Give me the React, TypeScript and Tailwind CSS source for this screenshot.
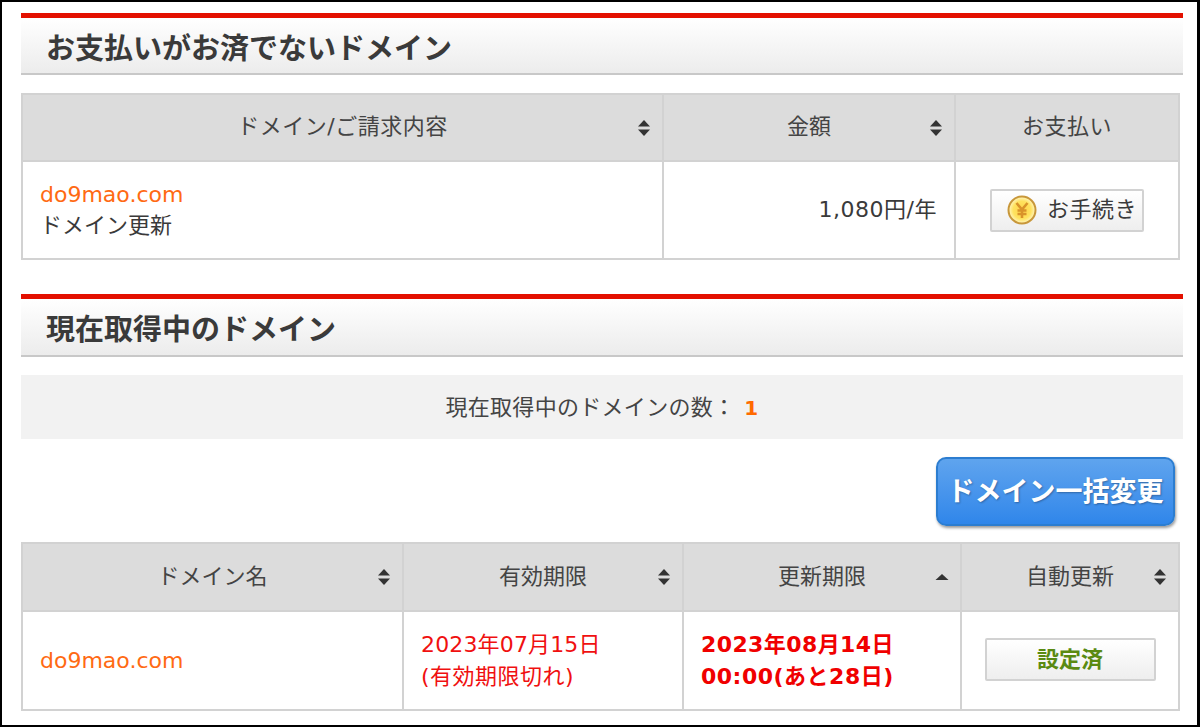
const font = { fontFamily: '"DejaVu Sans", "Noto Sans CJK JP", sans-serif' };

const SortIcon = ({ up = false }: { up?: boolean }) =>
  up ? (
    <svg width="14" height="16" viewBox="0 0 14 16" className="absolute right-[11px] top-1/2 -translate-y-1/2">
      <path d="M0.5 11 L7 5 L13.5 11 Z" fill="#333" />
    </svg>
  ) : (
    <svg width="14" height="18" viewBox="0 0 14 18" className="absolute right-[11px] top-1/2 -translate-y-1/2">
      <path d="M1 7.6 L7 1 L13 7.6 Z" fill="#333" />
      <path d="M1 10.4 L7 17 L13 10.4 Z" fill="#333" />
    </svg>
  );

const Heading = ({ children, tall = false }: { children: React.ReactNode; tall?: boolean }) => (
  <div className={`${tall ? "h-[63px] leading-[63px]" : "h-[62px] leading-[62px]"} border-t-[5px] border-b-2 border-t-[#e31000] border-b-[#c8c8c8] bg-gradient-to-b from-white to-[#ececec] pl-[25px] text-[29px] font-bold text-[#3a3a3a]`}>
    {children}
  </div>
);

const Th = ({ label, sort, width, className = "" }: { label: string; sort?: "both" | "up"; width: number; className?: string }) => (
  <th
    style={{ width }}
    className={`relative border-2 border-[#d2d2d2] bg-[#dcdcdc] p-0 text-center text-[22px] font-normal text-[#444] ${className}`}
  >
    {label}
    {sort && <SortIcon up={sort === "up"} />}
  </th>
);

const YenIcon = () => (
  <svg width="30" height="30" viewBox="0 0 30 30">
    <defs>
      <radialGradient id="coin" cx="50%" cy="50%" r="50%">
        <stop offset="0%" stopColor="#ffd24a" />
        <stop offset="65%" stopColor="#ffe25e" />
        <stop offset="100%" stopColor="#fff6c4" />
      </radialGradient>
    </defs>
    <circle cx="15" cy="15" r="13.5" fill="url(#coin)" stroke="#c8973a" strokeWidth="2" />
    <path d="M9.5 8 L15 14.5 L20.5 8 M15 14.5 V23 M10.5 15.5 H19.5 M10.5 19 H19.5" fill="none" stroke="#d9932a" strokeWidth="2.6" />
  </svg>
);

export default function App() {
  return (
    <div style={font} className="h-[727px] w-[1200px] overflow-hidden border-2 border-r-[3px] border-black bg-white pt-[11px] pr-[14px] pl-[19px] leading-tight text-[#3a3a3a]">
      <Heading>お支払いがお済でないドメイン</Heading>
      <table className="mt-[18px] w-[1157px] table-fixed border-collapse">
        <thead>
          <tr className="h-[67px]">
            <Th label="ドメイン/ご請求内容" sort="both" width={641} className="pb-[2px] tracking-[0.5px]" />
            <Th label="金額" sort="both" width={292} className="pb-[2px]" />
            <Th label="お支払い" width={224} className="pb-[2px] tracking-[0.5px]" />
          </tr>
        </thead>
        <tbody>
          <tr className="h-[98px]">
            <td className="border-2 border-[#d2d2d2] pl-[17px] text-[22px] leading-[31px]">
              <div className="text-[#ff6a13]">do9mao.com</div>
              <div>ドメイン更新</div>
            </td>
            <td className="border-2 border-[#d2d2d2] pr-[17px] text-right text-[22px] tracking-[0.5px]">1,080円/年</td>
            <td className="border-2 border-[#d2d2d2] text-center">
              <button className="inline-flex h-[43px] w-[154px] items-center gap-[10px] rounded-[2px] border-2 border-[#d2d2d2] bg-gradient-to-b from-white to-[#eeeeee] pl-[15px] text-[22px] tracking-[0.5px] text-[#3a3a3a]">
                <YenIcon />
                お手続き
              </button>
            </td>
          </tr>
        </tbody>
      </table>

      <div className="mt-[34px]">
        <Heading tall>現在取得中のドメイン</Heading>
      </div>
      <div className="mt-[18px] flex h-[64px] items-center justify-center gap-[9px] bg-[#f2f2f2] pt-[2px] text-[22px] tracking-[0.3px] text-[#444]">
        <span>現在取得中のドメインの数：</span>
        <span className="text-[20px] font-bold text-[#ff6a00]">1</span>
      </div>
      <div className="mt-[18px] flex justify-end pr-[8px]">
        <button className="h-[69px] w-[239px] rounded-[10px] border-2 border-[#2c7dd0] bg-gradient-to-b from-[#5fa4ee] to-[#2f86ea] text-[27px] font-bold whitespace-nowrap text-white shadow-[1px_2px_3px_rgba(0,0,0,0.4)] [text-shadow:1px_1px_2px_rgba(0,0,0,0.3)]">
          ドメイン一括変更
        </button>
      </div>
      <table className="mt-[16px] w-[1157px] table-fixed border-collapse">
        <thead>
          <tr className="h-[68px]">
            <Th label="ドメイン名" sort="both" width={381} />
            <Th label="有効期限" sort="both" width={280} />
            <Th label="更新期限" sort="up" width={278} />
            <Th label="自動更新" sort="both" width={218} />
          </tr>
        </thead>
        <tbody>
          <tr className="h-[99px]">
            <td className="border-2 border-[#d2d2d2] pl-[17px] text-[22px] text-[#ff6a13]">do9mao.com</td>
            <td className="border-2 border-[#d2d2d2] pl-[17px] text-[22px] leading-[32px] text-[#f01010]">
              <div className="tracking-[0.15px]">2023年07月15日</div>
              <div className="tracking-[0.5px]">(有効期限切れ)</div>
            </td>
            <td className="border-2 border-[#d2d2d2] pl-[17px] text-[22px] leading-[32px] font-bold text-[#f00000]">
              <div className="tracking-[0.4px]">2023年08月14日</div>
              <div className="tracking-[0.5px]">00:00(あと28日)</div>
            </td>
            <td className="border-2 border-[#d2d2d2] pb-[2px] text-center">
              <button className="h-[43px] w-[171px] rounded-[2px] border-2 border-[#d2d2d2] bg-gradient-to-b from-white to-[#eeeeee] text-[22px] font-bold text-[#5a8a12]">
                設定済
              </button>
            </td>
          </tr>
        </tbody>
      </table>
    </div>
  );
}
